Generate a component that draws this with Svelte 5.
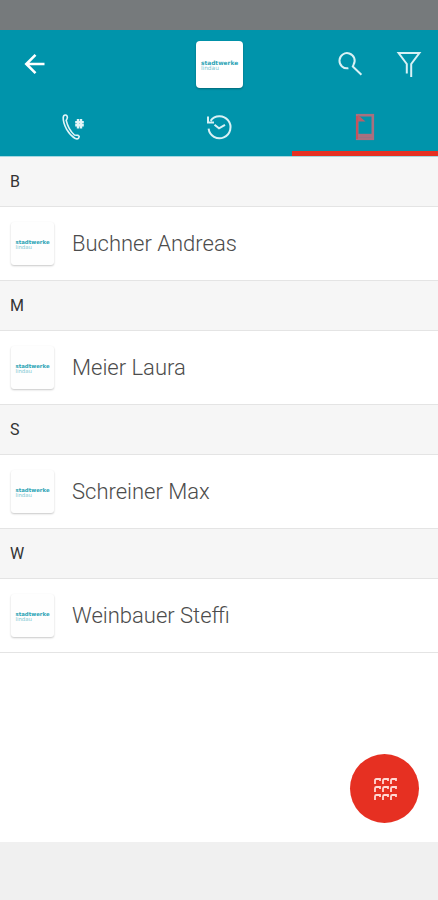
<script lang="ts">
	interface Group {
		letter: string;
		names: string[];
	}

	const groups: Group[] = [
		{ letter: 'B', names: ['Buchner Andreas'] },
		{ letter: 'M', names: ['Meier Laura'] },
		{ letter: 'S', names: ['Schreiner Max'] },
		{ letter: 'W', names: ['Weinbauer Steffi'] }
	];

	const tabs = ['calls', 'history', 'contacts'];
	let activeTab = $state('contacts');
</script>

{#snippet logo()}
	<svg viewBox="0 0 48 48" aria-hidden="true">
		<text class="logo-name" x="5" y="24" font-size="6">stadtwerke</text>
		<text class="logo-town" x="5" y="30" font-size="6">lindau</text>
	</svg>
{/snippet}

<div class="app">
	<div class="status-bar"></div>

	<header>
		<div class="toolbar">
			<div class="side">
				<button class="icon-button" aria-label="Back">
					<svg width="24" height="24" viewBox="0 0 24 24" fill="none" stroke="#fff" stroke-width="2.6">
						<path d="M21.5 12H4M12.5 2.8L3.3 12l9.2 9.2" />
					</svg>
				</button>
			</div>
			<div class="brand">{@render logo()}</div>
			<div class="side right">
				<button class="icon-button" aria-label="Search">
					<svg width="26" height="26" viewBox="0 0 26 26" fill="none" stroke="#d8f1f5" stroke-width="2">
						<path d="M10.4 17.2A7.6 7.6 0 1 1 15.6 13.6L14.8 15.4L23.4 23.8" />
					</svg>
				</button>
				<button class="icon-button" aria-label="Filter">
					<svg width="26" height="26" viewBox="0 0 26 26" fill="none" stroke="#d8f1f5" stroke-width="2">
						<path d="M10.8 22.5V13L2.6 2H23.4L15.2 13V26" />
					</svg>
				</button>
			</div>
		</div>

		<nav class="tabs">
			{#each tabs as tab}
				<button
					class="tab"
					class:active={activeTab === tab}
					aria-label={tab}
					aria-pressed={activeTab === tab}
					onclick={() => (activeTab = tab)}
				>
					{#if tab === 'calls'}
						<svg width="28" height="28" viewBox="0 0 28 28" fill="none" stroke="#e2f5f8">
							<path
								d="M8.4 5C8.4 1.2 4.6 1 4.2 4.6C4 12 9.5 21.4 16.4 25.6C19.4 26.6 21.2 24 19.4 22.4M8.4 5L7.2 7.4C8.6 13.4 11.4 18.4 15.4 22L19.4 22.4"
								stroke-width="1.6"
								stroke-linejoin="round"
							/>
							<path d="M19 6v9.5M22 6v9.5M16.2 9.2h8.6M16.2 12.3h8.6" stroke-width="2.4" />
						</svg>
					{:else if tab === 'history'}
						<svg width="28" height="28" viewBox="0 0 28 28" fill="none" stroke="#d8f1f5" stroke-width="2">
							<path d="M3.6 15.6A11 11 0 1 0 5.6 7.8M3 3.5V9.4H9" />
							<path d="M9.5 11.8L14 15.4L20 11.8" />
						</svg>
					{:else}
						<svg width="28" height="28" viewBox="0 0 28 28" fill="none" stroke="#a8707f" stroke-width="2.6">
							<rect x="6.2" y="2.2" width="15.6" height="23.6" />
							<path d="M6 22.8H22" stroke-width="4" />
							<path d="M7 2L14.5 8.5H7Z" fill="#b85f69" stroke="none" />
							<path d="M6 3V26" stroke="#c4545c" stroke-width="2" />
						</svg>
					{/if}
				</button>
			{/each}
		</nav>
	</header>

	<main>
		{#each groups as group}
			<section>
				<h2>{group.letter}</h2>
				<ul>
					{#each group.names as name}
						<li>
							<span class="avatar">{@render logo()}</span>
							<span class="name">{name}</span>
						</li>
					{/each}
				</ul>
			</section>
		{/each}

		<button class="dial" aria-label="Open dial pad">
			<svg width="24" height="24" viewBox="0 0 24 24" fill="none" stroke="#ffd9d4" stroke-width="1.8">
				{#each [2, 10, 18] as y}
					{#each [2, 10, 18] as x}
						<path d="M{x} {y + 5}V{y + 1.4}Q{x} {y} {x + 1.4} {y}H{x + 5}V{y + 2}" />
					{/each}
				{/each}
			</svg>
		</button>
	</main>

	<div class="nav-bar"></div>
</div>

<style>
	:global(body) {
		margin: 0;
		background: #fff;
	}

	.app {
		min-height: 100vh;
		display: flex;
		flex-direction: column;
		font-family: Roboto, 'Liberation Sans', sans-serif;
	}

	button {
		margin: 0;
		padding: 0;
		border: 0;
		background: none;
		cursor: pointer;
	}

	svg {
		display: block;
	}

	.status-bar {
		height: 30px;
		background: #767a7c;
	}

	header {
		background: #0094ab;
		border-bottom: 1px solid #a5d8e1;
	}

	.toolbar {
		display: flex;
		align-items: center;
		height: 68px;
		padding: 0 16px;
	}

	.side {
		flex: 1;
		display: flex;
		gap: 32px;
	}

	.right {
		justify-content: flex-end;
	}

	.icon-button {
		width: 38px;
		height: 38px;
		display: flex;
		align-items: center;
		justify-content: center;
	}

	.right .icon-button {
		width: 26px;
	}

	.brand {
		width: 47px;
		height: 47px;
		border-radius: 4px;
		background: #fff;
		box-shadow: 0 1px 2px rgba(0, 0, 0, 0.3);
	}

	.logo-name,
	.logo-town {
		font-family: 'DejaVu Sans', sans-serif;
	}

	.logo-name {
		fill: #2ba3b5;
		font-weight: 700;
	}

	.logo-town {
		fill: #7cc6d1;
	}

	.tabs {
		display: flex;
		height: 58px;
	}

	.tab {
		flex: 1;
		display: flex;
		align-items: center;
		justify-content: center;
		border-top: 5px solid transparent;
		border-bottom: 5px solid transparent;
	}

	.tab.active {
		border-bottom-color: #e63022;
	}

	main {
		flex: 1;
		position: relative;
		background: #fff;
	}

	h2 {
		margin: 0;
		padding: 0 10px;
		font-size: 16px;
		font-weight: 400;
		line-height: 49px;
		color: #333;
		background: #f6f6f6;
		border-bottom: 1px solid #e4e4e4;
	}

	ul {
		margin: 0;
		padding: 0;
		list-style: none;
	}

	li {
		display: flex;
		align-items: center;
		gap: 18px;
		height: 73px;
		padding: 0 11px;
		border-bottom: 1px solid #e4e4e4;
	}

	.avatar {
		width: 43px;
		height: 43px;
		border-radius: 3px;
		background: #fefefe;
		box-shadow: 0 1px 2px rgba(0, 0, 0, 0.22);
	}

	.name {
		font-size: 22px;
		font-weight: 300;
		line-height: 28px;
		color: #4c4c4c;
	}

	.dial {
		position: absolute;
		right: 19px;
		bottom: 19px;
		width: 69px;
		height: 69px;
		display: flex;
		align-items: center;
		justify-content: center;
		border-radius: 50%;
		background: #e63022;
	}

	.nav-bar {
		height: 58px;
		background: #f0f0f0;
	}
</style>
